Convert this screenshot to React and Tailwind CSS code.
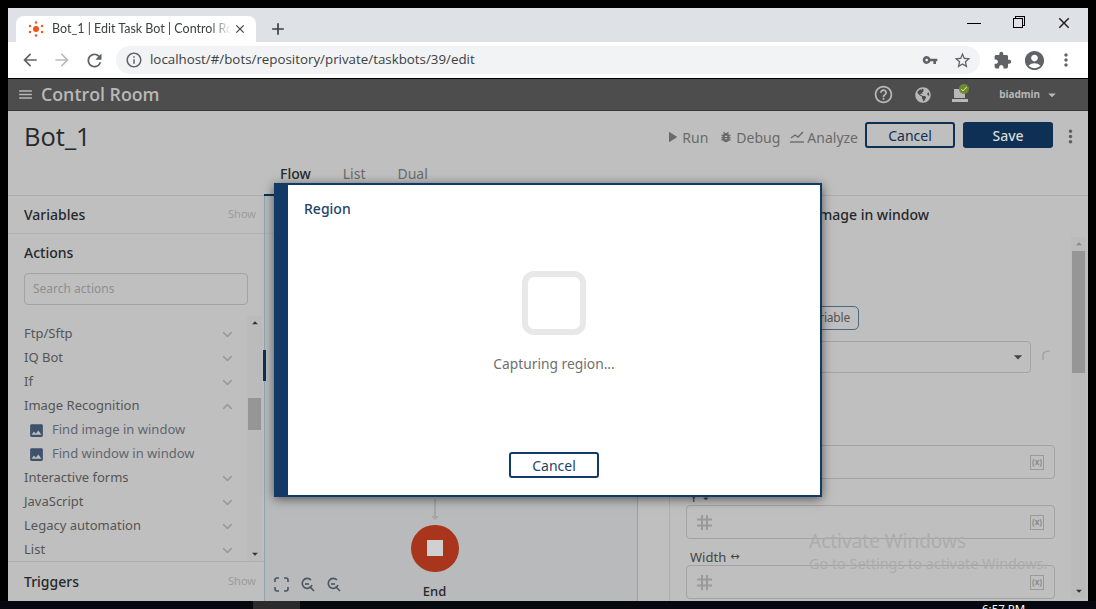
import { MdArrowBack, MdArrowForward, MdRefresh, MdInfoOutline, MdVpnKey, MdStarBorder, MdExtension, MdAccountCircle, MdMoreVert, MdClose, MdAdd, MdImage, MdHelpOutline, MdMenu, MdPlayArrow, MdBugReport, MdArrowDropDown, MdArrowDropUp, MdCheck } from 'react-icons/md';
import { FaGlobeAmericas } from 'react-icons/fa';
import { LuChevronDown, LuChevronUp } from 'react-icons/lu';

const NAVY = 'border-[#0f3055]';

function Favicon() {
    return (
        <svg width="16" height="16" viewBox="0 0 16 16" fill="#f4511e">
            <circle cx="8" cy="8" r="3" />
            <circle cx="8" cy="1.5" r="1.2" />
            <circle cx="8" cy="14.5" r="1.2" />
            <circle cx="2" cy="5" r="1.2" />
            <circle cx="14" cy="5" r="1.2" />
            <circle cx="2" cy="11" r="1.2" />
            <circle cx="14" cy="11" r="1.2" />
        </svg>
    );
}

function ActionRow({ label, open }) {
    return (
        <div className="flex h-6 items-center justify-between pr-[12px] text-[13px] text-[#555]">
            <span>{label}</span>
            {open ? <LuChevronUp size={15} strokeWidth={2.5} className="text-[#9a9a9a]" /> : <LuChevronDown size={15} strokeWidth={2.5} className="text-[#9a9a9a]" />}
        </div>
    );
}

function SubRow({ label }) {
    return (
        <div className="flex h-6 items-center pl-[4px] text-[13px] text-[#5f6670]">
            <MdImage size={17} className="mr-[7px] text-[#3e526b]" />
            <span>{label}</span>
        </div>
    );
}

function NumberField() {
    return (
        <div className="flex h-[34px] items-center justify-between rounded-sm border border-[#a3a3a3] pl-[10px] pr-[10px]">
            <svg width="15" height="15" viewBox="0 0 15 15" fill="none" stroke="#9a9a9a" strokeWidth="2">
                <path d="M5 0V15M10 0V15M0 4.5H15M0 10.5H15" />
            </svg>
            <VarBadge />
        </div>
    );
}

function VarBadge() {
    return (
        <span className="flex h-[15px] w-[14px] items-center justify-center border border-[#9a9a9a] text-[8px] font-bold text-[#8a8a8a]">(x)</span>
    );
}

function ZoomIcon() {
    return (
        <svg width="15" height="15" viewBox="0 0 15 15" fill="none" stroke="#4a5560" strokeWidth="1.6">
            <path d="M11 3A5 5 0 1 0 12 8" />
            <path d="M9.5 9.5L14 14" />
            <path d="M5 7H9" />
        </svg>
    );
}

export default function App() {
    return (
        <div className="flex h-[609px] w-[1096px] flex-col overflow-hidden bg-black font-['Noto_Sans',sans-serif]">
            <div className="relative mx-2 mt-2 flex h-[593px] flex-col overflow-hidden">
                {/* chrome tab strip */}
                <div className="flex h-[34px] shrink-0 items-end bg-[#dee1e6] pl-2">
                    <div className="flex h-[26px] w-[240px] items-center rounded-t-lg bg-white pl-3 pr-[9px] font-['Lato',sans-serif] text-[12.5px] text-[#3c4043]">
                        <Favicon />
                        <span className="ml-2 flex-1 overflow-hidden whitespace-nowrap [mask-image:linear-gradient(to_right,black_88%,transparent)]">Bot_1 | Edit Task Bot | Control Room</span>
                        <MdClose size={14} className="ml-[2px] shrink-0 text-[#3c4043]" />
                    </div>
                    <MdAdd size={20} className="mb-[3px] ml-3 text-[#3c4043]" />
                    <div className="mb-[10px] ml-auto mr-[15px] flex items-center gap-[32px]">
                        <span className="h-px w-[14px] bg-black"></span>
                        <span className="relative h-[10px] w-[10px] border border-black bg-[#dee1e6] shadow-[2px_-2px_0_-1px_#dee1e6,2px_-2px_0_0_#000]"></span>
                        <MdClose size={18} className="text-[#222]" />
                    </div>
                </div>

                {/* chrome toolbar */}
                <div className="flex h-[36px] shrink-0 items-center bg-white pl-[12px] pr-[12px]">
                    <MdArrowBack size={20} className="text-[#5f6368]" />
                    <MdArrowForward size={20} className="ml-[12px] text-[#bcbcbc]" />
                    <MdRefresh size={21} className="ml-[12px] text-[#5f6368]" />
                    <div className="ml-[11px] flex h-[28px] w-[864px] items-center rounded-full bg-[#f1f3f4] pl-[9px] pr-[8px] text-[#5f6368]">
                        <MdInfoOutline size={18} />
                        <span className="ml-[7px] flex-1 font-['Open_Sans',sans-serif] text-[13.33px] text-[#3c4043]">localhost/#/bots/repository/private/taskbots/39/edit</span>
                        <MdVpnKey size={16} className="mr-[15px] text-[#5f6368]" />
                        <MdStarBorder size={19} className="text-[#5f6368]" />
                    </div>
                    <MdExtension size={19} className="ml-[13px] text-[#5f6368]" />
                    <MdAccountCircle size={23} className="ml-[11px] text-[#5f6368]" />
                    <MdMoreVert size={20} className="ml-[10px] text-[#5f6368]" />
                </div>

                {/* app bar */}
                <div className="mt-px flex h-[32px] shrink-0 items-center border-b border-[#3a3a3a] bg-[#4d4d4d] pl-[9px] text-[#b8b8b8]">
                    <MdMenu size={17} />
                    <span className="ml-[7px] font-['Open_Sans',sans-serif] text-[17.8px] font-semibold">Control Room</span>
                    <div className="ml-auto flex items-center">
                        <MdHelpOutline size={21} />
                        <FaGlobeAmericas size={16} className="ml-[21px]" />
                        <div className="relative ml-[21px] h-[16px] w-[16px]">
                            <svg width="16" height="16" viewBox="0 0 16 16" fill="#b8b8b8"><path d="M2 2H13V11H2Z" /><path d="M0 12H16V15H0Z" /></svg>
                            <span className="absolute -right-[1px] -top-[3px] flex h-[10px] w-[10px] items-center justify-center rounded-full bg-[#6f8a2a]"><MdCheck size={8} className="text-white" /></span>
                        </div>
                        <span className="ml-[31px] text-[10px] font-bold">biadmin</span>
                        <MdArrowDropDown size={18} className="ml-[3px] mr-[27px]" />
                    </div>
                </div>

                {/* page */}
                <div className="flex min-h-0 flex-1 flex-col bg-[#bfbfbf]">
                    <div className="relative h-[85px] shrink-0 border-b border-[#adadad]">
                        <div className="flex items-center pl-4 pr-[7px] pt-[10px]">
                            <span className="font-['Open_Sans',sans-serif] text-[25.5px] leading-[30px] text-[#26282b]">Bot_1</span>
                            <div className="ml-auto flex items-center pt-[2px] text-[14px] text-[#6a6a6a]">
                                <MdPlayArrow size={18} />
                                <span className="ml-[1px]">Run</span>
                                <MdBugReport size={14} className="ml-[11px]" />
                                <span className="ml-[3px]">Debug</span>
                                <svg width="14" height="12" viewBox="0 0 14 12" fill="none" stroke="#6a6a6a" strokeWidth="1.4" className="ml-[10px]"><path d="M1 7L5 4L8 6L13 1" /><path d="M0 11H14" /></svg>
                                <span className="ml-[3px]">Analyze</span>
                            </div>
                            <div className="flex items-center pb-[2px] text-[14px]">
                                <button className={`ml-[7px] h-[26px] w-[90px] rounded-[3px] border-2 ${NAVY} text-[#0f3055]`}>Cancel</button>
                                <button className="ml-2 h-[26px] w-[90px] rounded-[3px] bg-[#0f3055] font-medium text-[#d9d9d9]">Save</button>
                            </div>
                            <MdMoreVert size={21} className="ml-[7px] text-[#5f5f5f]" />
                        </div>
                        <div className="absolute bottom-[11px] left-[272px] flex gap-[32px] text-[14px] leading-[20px] text-[#6b6b6b]">
                            <span className="font-medium text-[#26282b]">Flow</span>
                            <span>List</span>
                            <span>Dual</span>
                        </div>
                        <div className="absolute -bottom-px left-[256px] h-[2px] w-[10px] bg-[#0f3055]"></div>
                    </div>

                    <div className="flex min-h-0 flex-1">
                        {/* left sidebar */}
                        <div className="flex w-[256px] shrink-0 flex-col">
                            <div className="flex h-[38px] shrink-0 items-center justify-between border-b border-[#adb2b5] pl-4 pr-2">
                                <span className="text-[14px] font-medium text-[#26282b]">Variables</span>
                                <span className="text-[11px] text-[#9b9b9b]">Show</span>
                            </div>
                            <div className="flex h-[328px] shrink-0 flex-col border-b border-[#adadad] pl-4">
                                <div className="mt-[9px] text-[14px] font-medium leading-[20px] text-[#26282b]">Actions</div>
                                <div className="mt-[10px] flex h-[32px] w-[224px] items-center rounded-sm border border-[#a3a3a3] pl-2 text-[12px] text-[#8f8f8f]">Search actions</div>
                                <div className="mt-[11px] flex min-h-0 flex-1">
                                    <div className="w-[223px] pt-[6px]">
                                        <ActionRow label="Ftp/Sftp" />
                                        <ActionRow label="IQ Bot" />
                                        <ActionRow label="If" />
                                        <ActionRow label="Image Recognition" open />
                                        <SubRow label="Find image in window" />
                                        <SubRow label="Find window in window" />
                                        <ActionRow label="Interactive forms" />
                                        <ActionRow label="JavaScript" />
                                        <ActionRow label="Legacy automation" />
                                        <ActionRow label="List" />
                                    </div>
                                    <div className="flex w-[15px] flex-col items-center bg-[#bbbbbb]">
                                        <MdArrowDropUp size={14} className="text-[#333]" />
                                        <div className="mt-[68px] h-[32px] w-[13px] bg-[#969696]"></div>
                                        <MdArrowDropDown size={14} className="mt-auto text-[#333]" />
                                    </div>
                                </div>
                            </div>
                            <div className="flex flex-1 items-center justify-between pl-4 pr-2">
                                <span className="text-[14px] font-medium text-[#26282b]">Triggers</span>
                                <span className="text-[11px] text-[#9b9b9b]">Show</span>
                            </div>
                        </div>

                        {/* canvas */}
                        <div className="relative flex w-[374px] shrink-0 flex-col items-center border-x border-[#90a4b0] bg-[#b9babb]">
                            <div className="h-[38px] w-full shrink-0 border-b border-[#adb2b5]"></div>
                            <div className="absolute -left-[2px] top-[154px] h-[31px] w-[3px] bg-[#0f3055]"></div>
                            <div className="ml-[-33px] mt-[265px] h-[18px] w-[2px] bg-[#a5a5a5]"></div>
                            <div className="ml-[-33px] h-0 w-0 border-x-[4px] border-t-[4px] border-x-transparent border-t-[#a5a5a5]"></div>
                            <div className="ml-[-33px] mt-[5px] flex h-[48px] w-[48px] items-center justify-center rounded-full bg-[#a9351c]">
                                <div className="h-4 w-4 bg-[#d0d0d0]"></div>
                            </div>
                            <div className="ml-[-33px] mt-[10px] text-[13px] font-medium text-[#26282b]">End</div>
                            <div className="absolute bottom-[9px] left-[9px] flex items-center gap-[11px]">
                                <svg width="15" height="15" viewBox="0 0 15 15" fill="none" stroke="#4a5560" strokeWidth="1.6"><path d="M1 5V3Q1 1 3 1H5M10 1H12Q14 1 14 3V5M14 10V12Q14 14 12 14H10M5 14H3Q1 14 1 12V10" /></svg>
                                <ZoomIcon />
                                <ZoomIcon />
                            </div>
                        </div>

                        {/* right panel */}
                        <div className="min-w-0 flex-1 pl-[31px]">
                            <div className="h-full border-l border-[#adadad] pl-[16px]">
                                <div className="flex h-[36px] items-center pl-[97px] text-[14px] font-medium whitespace-nowrap text-[#26282b]">Find image in window</div>
                                <div className="flex">
                                    <div className="w-[369px]">
                                        <div className="ml-[64px] mt-[74px] flex h-[24px] w-[109px] items-center justify-end rounded-[5px] border border-[#4c6782] pr-[8px] text-[12px] tracking-[-0.2px] text-[#555]">Variable</div>
                                        <div className="mt-[11px] flex items-center">
                                            <div className="flex h-[32px] w-[345px] items-center justify-end rounded-sm border border-[#a3a3a3] pr-[2px]">
                                                <MdArrowDropDown size={20} className="text-[#444]" />
                                            </div>
                                            <svg width="9" height="10" viewBox="0 0 9 10" fill="none" stroke="#9c9c9c" strokeWidth="1.2" className="ml-[11px] mb-[4px]"><path d="M1 10V5Q1 1 8 1" /></svg>
                                        </div>
                                        <div className="h-[72px]"></div>
                                        <NumberField />
                                        <div className="flex h-[26px] items-end pb-[1px] pl-1 text-[13px] leading-[14px] text-[#444]">Y <span className="ml-1 font-['DejaVu_Sans',sans-serif] text-[11px]">↕</span></div>
                                        <NumberField />
                                        <div className="flex h-[26px] items-end pb-[1px] pl-1 text-[13px] leading-[14px] text-[#444]">Width <span className="ml-1 font-['DejaVu_Sans',sans-serif] text-[11px]">↔</span></div>
                                        <NumberField />
                                    </div>
                                    <div className="ml-4 mt-[5px] flex h-[361px] w-[15px] flex-col items-center bg-[#bbbbbb]">
                                        <MdArrowDropUp size={14} className="text-[#888]" />
                                        <div className="h-[122px] w-[13px] bg-[#969696]"></div>
                                        <MdArrowDropDown size={14} className="mt-auto text-[#333]" />
                                    </div>
                                </div>
                            </div>
                        </div>
                    </div>
                </div>

                {/* activate windows watermark */}
                <div className="pointer-events-none absolute left-[801px] top-[521px] text-[#acacac]">
                    <div className="text-[19px] leading-[24px]">Activate Windows</div>
                    <div className="text-[14.4px] leading-[21px]">Go to Settings to activate Windows.</div>
                </div>

                {/* region dialog */}
                <div className="absolute left-[266px] top-[175px] flex h-[314px] w-[548px] border-2 border-[#133a66] shadow-[0_2px_10px_rgba(0,0,0,0.55)]">
                    <div className="w-3 bg-[#133a66]"></div>
                    <div className="flex flex-1 flex-col items-center bg-white">
                        <div className="mt-[14px] w-full pl-4 text-[14px] font-medium leading-[20px] text-[#1f4468]">Region</div>
                        <div className="mt-[52px] h-16 w-16 rounded-[12px] border-[6px] border-[#e8e8e8]"></div>
                        <div className="mt-[19px] text-[13.8px] leading-[20px] text-[#707070]">Capturing region...</div>
                        <button className="mt-[78px] h-[26px] w-[90px] rounded-[3px] border-2 border-[#133a66] text-[14px] text-[#1f4468]">Cancel</button>
                    </div>
                </div>
            </div>

            {/* taskbar sliver */}
            <div className="flex h-2 shrink-0 overflow-hidden bg-[#05080c]">
                <div className="ml-[253px] h-2 w-[47px] bg-[#2b2b2b]"></div>
                <div className="ml-[682px] pt-[1px] text-[11.5px] leading-[14px] text-white">6:57 PM</div>
            </div>
        </div>
    );
}
